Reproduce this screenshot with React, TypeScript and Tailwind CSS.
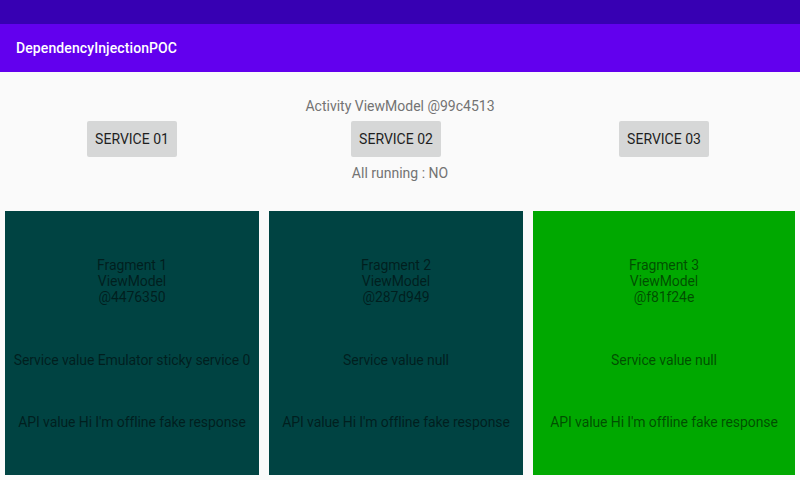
export default function App() {
  const fragments = [
    { name: "Fragment 1", id: "@4476350", service: "Service value Emulator sticky service 0", bg: "bg-[#004342]", w: "w-[254px]" },
    { name: "Fragment 2", id: "@287d949", service: "Service value null", bg: "bg-[#004342]", w: "w-[254px]" },
    { name: "Fragment 3", id: "@f81f24e", service: "Service value null", bg: "bg-[#00a800]", w: "flex-1" },
  ];

  return (
    <main className="w-[800px] h-[480px] flex flex-col bg-[#fafafa] font-['Roboto',sans-serif] text-[14px] overflow-hidden">
      <div className="h-6 bg-[#3700b3]" />
      <header className="h-12 bg-[#6200ee] flex items-center px-4">
        <span className="text-white font-medium text-[14px] tracking-[0.1px]">DependencyInjectionPOC</span>
      </header>

      <section className="flex flex-col items-center pt-[26px]">
        <div className="leading-4 text-[#737373]">Activity ViewModel @99c4513</div>
      </section>

      <div className="flex gap-[10px] px-[5px] mt-[7px]">
        {fragments.map((f, i) => (
          <div key={f.name} className={`${f.w} flex justify-center`}>
            <button className="w-[90px] h-9 bg-[#d6d7d7] rounded-[2px] text-[#1f1f1f] font-normal leading-4">
              SERVICE 0{i + 1}
            </button>
          </div>
        ))}
      </div>

      <div className="leading-4 text-[#737373] text-center mt-2">All running : NO</div>

      <div className="flex gap-[10px] px-[5px] mt-[30px] h-[264px]">
        {fragments.map((f) => (
          <div key={f.name} className={`${f.w} ${f.bg} flex flex-col items-center text-center text-black/55 leading-4 tracking-[-0.1px] pt-[46px]`}>
            <div>{f.name}</div>
            <div>ViewModel</div>
            <div>{f.id}</div>
            <div className="mt-[47px]">{f.service}</div>
            <div className="mt-[46px]">API value Hi I'm offline fake response</div>
          </div>
        ))}
      </div>
    </main>
  );
}
